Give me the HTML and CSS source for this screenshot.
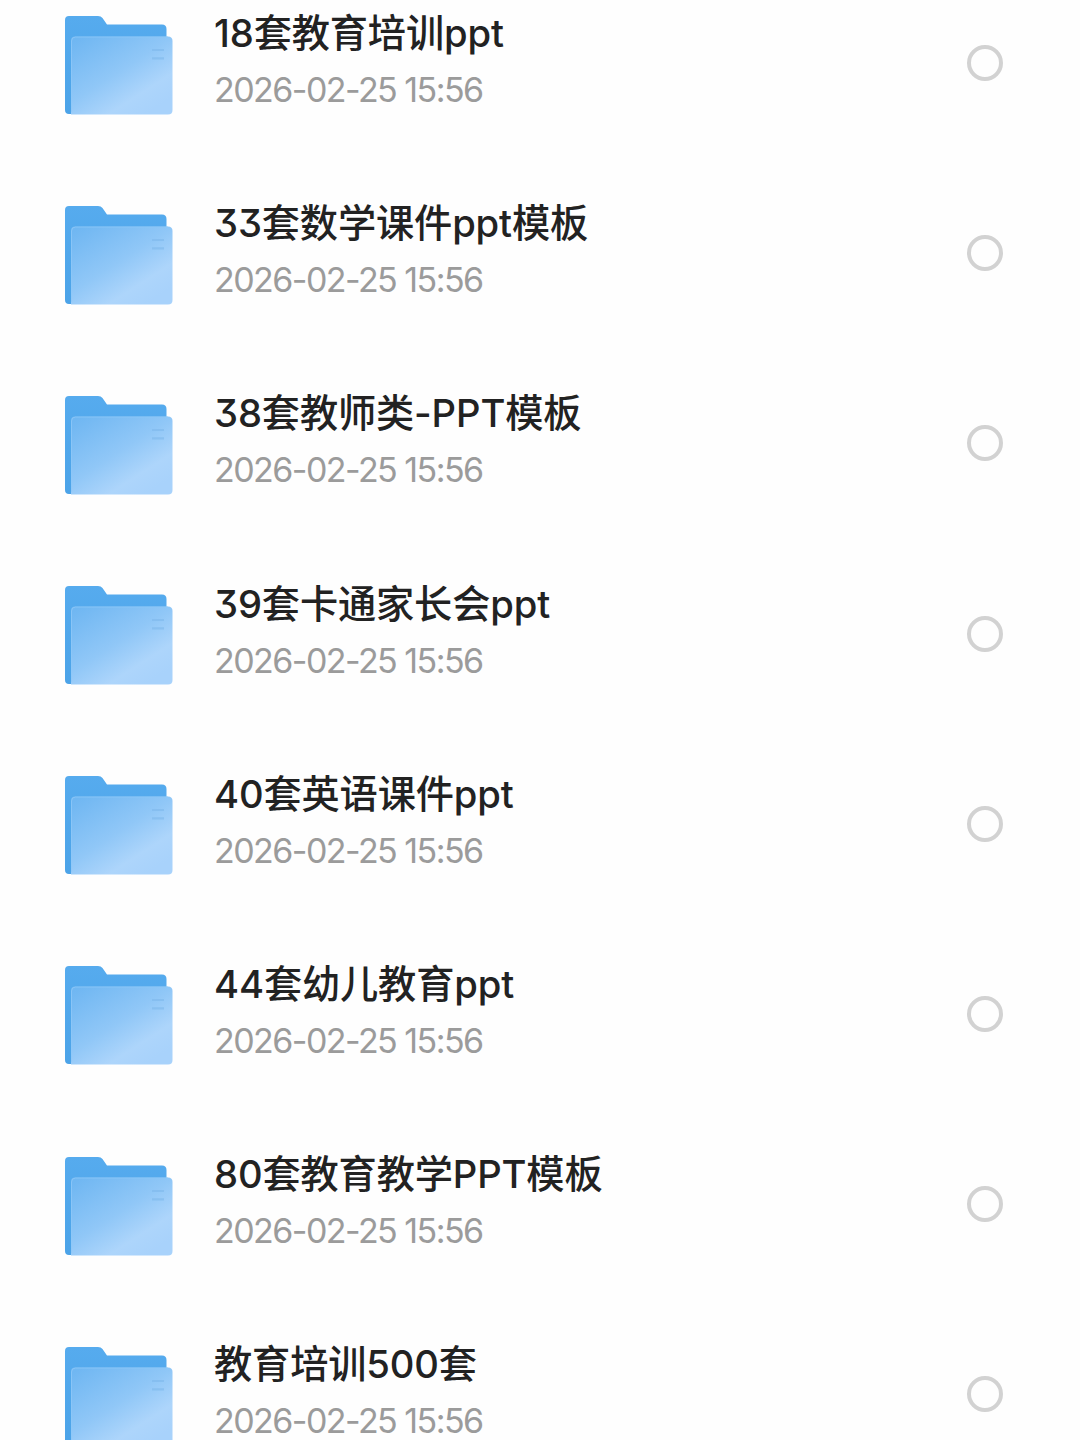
FILE: index.html
```html
<!DOCTYPE html>
<html lang="zh-CN">
<head>
    <meta charset="UTF-8">
    <meta name="viewport" content="width=device-width, initial-scale=1.0">
    <title>文件列表</title>
    <link rel="stylesheet" href="styles.css">
</head>
<body>
    <!-- Folder icon, reused by every row -->
    <svg class="sprite" width="0" height="0" aria-hidden="true">
        <defs>
            <linearGradient id="back" x1="0" y1="0" x2="0" y2="1">
                <stop offset="0" stop-color="#56abee"/>
                <stop offset="1" stop-color="#4ba3e8"/>
            </linearGradient>
            <linearGradient id="front" x1="0.1" y1="0" x2="0.85" y2="0.9">
                <stop offset="0" stop-color="#70b7f2"/>
                <stop offset="0.5" stop-color="#90c7f7"/>
                <stop offset="0.8" stop-color="#add5fb"/>
                <stop offset="1" stop-color="#a8d2fb"/>
            </linearGradient>
        </defs>
        <symbol id="folder" viewBox="0 0 108 99">
            <path fill="url(#back)" d="M4 0H33Q36 0 37.500 2L42 8.500H97Q101.500 8.500 101.500 13V98H4Q0 98 0 94V4Q0 0 4 0Z"/>
            <path fill="url(#front)" d="M10 20.500H103Q107.500 20.500 107.500 25V94Q107.500 98.500 103 98.500H6V24.500Q6 20.500 10 20.500Z"/>
            <path fill="none" stroke="#8ec8f7" stroke-width="0.800" d="M6.500 96V25Q6.500 21 10.500 21H103"/>
            <path stroke="#7fb9ec" stroke-width="2.200" opacity="0.600" d="M87 34H99M87 42.400H99"/>
        </symbol>
    </svg>

    <ul class="file-list">
        <li class="file">
            <svg class="icon"><use href="#folder"/></svg>
            <div class="info">
                <div class="name">18套教育培训ppt</div>
                <div class="date">2026-02-25 15:56</div>
            </div>
            <span class="check"></span>
        </li>
        <li class="file">
            <svg class="icon"><use href="#folder"/></svg>
            <div class="info">
                <div class="name">33套数学课件ppt模板</div>
                <div class="date">2026-02-25 15:56</div>
            </div>
            <span class="check"></span>
        </li>
        <li class="file">
            <svg class="icon"><use href="#folder"/></svg>
            <div class="info">
                <div class="name">38套教师类-PPT模板</div>
                <div class="date">2026-02-25 15:56</div>
            </div>
            <span class="check"></span>
        </li>
        <li class="file">
            <svg class="icon"><use href="#folder"/></svg>
            <div class="info">
                <div class="name">39套卡通家长会ppt</div>
                <div class="date">2026-02-25 15:56</div>
            </div>
            <span class="check"></span>
        </li>
        <li class="file">
            <svg class="icon"><use href="#folder"/></svg>
            <div class="info">
                <div class="name">40套英语课件ppt</div>
                <div class="date">2026-02-25 15:56</div>
            </div>
            <span class="check"></span>
        </li>
        <li class="file">
            <svg class="icon"><use href="#folder"/></svg>
            <div class="info">
                <div class="name">44套幼儿教育ppt</div>
                <div class="date">2026-02-25 15:56</div>
            </div>
            <span class="check"></span>
        </li>
        <li class="file">
            <svg class="icon"><use href="#folder"/></svg>
            <div class="info">
                <div class="name">80套教育教学PPT模板</div>
                <div class="date">2026-02-25 15:56</div>
            </div>
            <span class="check"></span>
        </li>
        <li class="file">
            <svg class="icon"><use href="#folder"/></svg>
            <div class="info">
                <div class="name">教育培训500套</div>
                <div class="date">2026-02-25 15:56</div>
            </div>
            <span class="check"></span>
        </li>
    </ul>
</body>
</html>
```
FILE: styles.css
```css
* { box-sizing: border-box; }

body {
    margin: 0;
    height: 100vh;
    overflow: hidden;
    background-color: #fefefe;
    font-family: Inter, "Noto Sans CJK SC", sans-serif;
}

.sprite {
    display: block;
}

/* list is scrolled a little, so the first row is cut at the top */
.file-list {
    list-style: none;
    margin: -31.6px 0 0;
    padding: 0;
}

.file {
    display: flex;
    align-items: center;
    height: 190.2px;
    padding: 0 77px 0 65px;
}

.icon {
    width: 108px;
    height: 99px;
    margin-top: 3px;
    flex-shrink: 0;
}

.info {
    flex: 1;
    margin-left: 41px;
    padding-bottom: 4px;
    white-space: nowrap;
}

.name {
    font-size: 38.2px;
    font-weight: 500;
    line-height: 56px;
    letter-spacing: -0.12px;
    color: #222;
    font-feature-settings: "cv09";
}

.date {
    font-size: 34px;
    font-weight: 440;
    line-height: 57px;
    letter-spacing: -1.55px;
    color: #9b9b9b;
}

.check {
    width: 36px;
    height: 36px;
    margin-bottom: 1px;
    border: 4px solid #d2d2d2;
    border-radius: 50%;
}
```
